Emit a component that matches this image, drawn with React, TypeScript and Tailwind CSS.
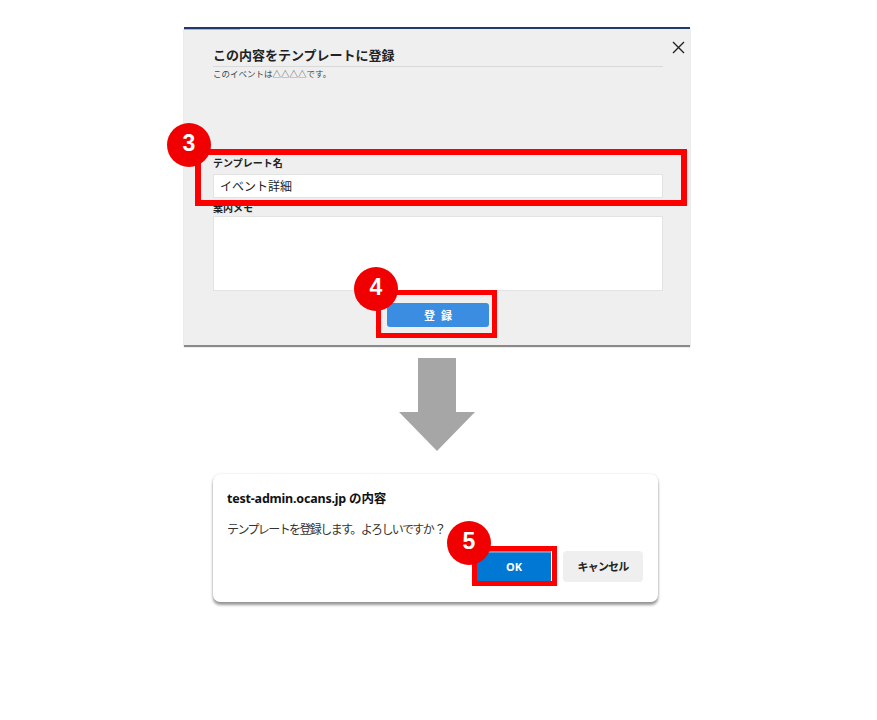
import React from "react"

const jp = "font-['Noto_Sans_CJK_JP',sans-serif]"

function Callout({ n, className }: { n: string; className: string }) {
  return (
    <div
      className={`absolute w-[44px] h-[44px] rounded-full bg-[#f00000] flex items-center justify-center text-white text-[23px] font-bold font-['Liberation_Sans',sans-serif] ${className}`}
    >
      <span className="-mt-[3px]">{n}</span>
    </div>
  )
}

export default function App() {
  return (
    <div className={`relative w-[877px] h-[720px] bg-white overflow-hidden ${jp}`}>
      {/* Template dialog */}
      <div className="pt-[27px] pl-[184px]">
        <div className="relative w-[506px] h-[318px] bg-[#efefef] border-t-2 border-[#1f3a6b] shadow-[0_2px_1px_#8a8a8a] px-[29px] pt-[17px]">
          <div className="absolute left-0 top-0 w-[56px] h-[1px] bg-[#c8c23a]" />
          <button className="absolute top-[10px] right-[4px] w-[16px] h-[16px] flex items-center justify-center">
            <svg width="13" height="13" viewBox="0 0 13 13">
              <path d="M1 1 L12 12 M12 1 L1 12" stroke="#222" strokeWidth="1.4" />
            </svg>
          </button>

          <div className="w-[450px] border-b border-[#d9d9d9] pb-[2px]">
            <h2 className="text-[13px] leading-[18px] font-bold text-[#222]">この内容をテンプレートに登録</h2>
          </div>
          <p className="text-[8.5px] leading-[12px] text-[#444]">このイベントは△△△△です。</p>

          <div className="mt-[77px] w-[450px]">
            <label className="block text-[10px] leading-[14px] font-bold text-[#222] mb-[4px]">テンプレート名</label>
            <div className="h-[24px] bg-white border border-[#e3e3e3] flex items-center px-[6px] text-[12px] text-[#222]">
              イベント詳細
            </div>

            <label className="block mt-[3px] mb-[1px] text-[10px] leading-[14px] font-bold text-[#222]">案内メモ</label>
            <div className="h-[75px] bg-white border border-[#e3e3e3]" />

            <div className="flex justify-center mt-[12px]">
              <button className="w-[102px] h-[24px] rounded-[3px] bg-[#3b8de2] text-white text-[11px] font-bold tracking-[6px] pl-[6px]">
                登録
              </button>
            </div>
          </div>
        </div>
      </div>

      {/* Arrow */}
      <div className="ml-[399px] mt-[13px] w-[76px] h-[93px]">
        <svg width="76" height="93" viewBox="0 0 76 93">
          <path d="M19 0 H57 V54 H76 L38 93 L0 54 H19 Z" fill="#a6a6a6" />
        </svg>
      </div>

      {/* Browser confirm */}
      <div className="ml-[213px] mt-[23px] w-[445px] h-[128px] bg-white rounded-[7px] shadow-[0_3px_3px_rgba(0,0,0,0.4),0_0_2px_rgba(0,0,0,0.15)] px-[14px] pt-[16px] flex flex-col">
        <h3 className="text-[12.5px] leading-[18px] font-bold text-[#111] font-['Noto_Sans','Noto_Sans_CJK_JP',sans-serif] tracking-[-0.2px]">
          test-admin.ocans.jp の内容
        </h3>
        <p className="mt-[13px] text-[12px] leading-[16px] text-[#333] tracking-[-1.6px]">
          テンプレートを登録します。よろしいですか ？
        </p>
        <div className="mt-[14px] flex justify-end gap-[12px] pr-[1px]">
          <button className="w-[74px] h-[30px] bg-[#0078d4] border-t-2 border-[#5a9bd5] text-white text-[11px] font-bold font-['Noto_Sans',sans-serif]">
            OK
          </button>
          <button className="w-[80px] h-[31px] rounded-[4px] bg-[#efefef] text-[#222] text-[11px] font-bold tracking-[-0.8px]">
            キャンセル
          </button>
        </div>
      </div>

      {/* Annotations */}
      <div className="absolute left-[195px] top-[149px] w-[492px] h-[57px] border-[6px] border-[#ff0000]" />
      <Callout n="3" className="left-[167px] top-[123px]" />

      <div className="absolute left-[376px] top-[290px] w-[121px] h-[48px] border-[5px] border-[#ff0000]" />
      <Callout n="4" className="left-[354px] top-[267px]" />

      <div className="absolute left-[472px] top-[546px] w-[85px] h-[40px] border-[5px] border-[#ff0000]" />
      <Callout n="5" className="left-[447px] top-[521px]" />
    </div>
  )
}
